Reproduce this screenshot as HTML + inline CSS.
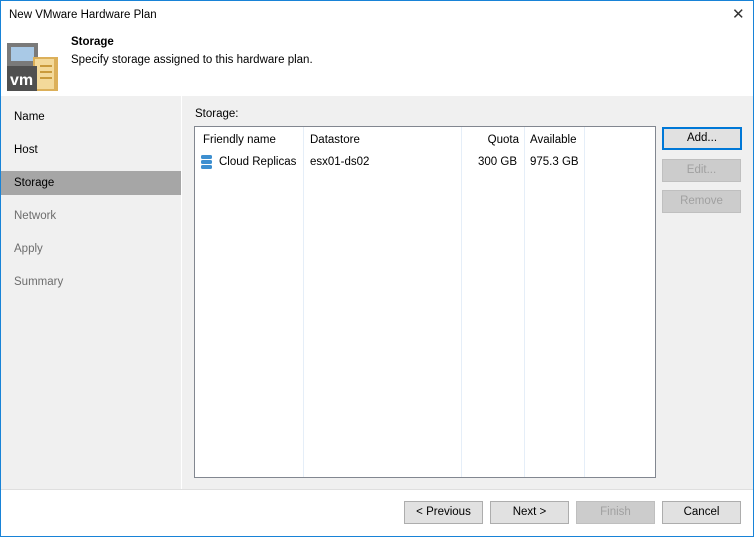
<!DOCTYPE html><html><head><style>
body{margin:0;width:754px;height:537px;overflow:hidden;font-family:"Liberation Sans",sans-serif;font-size:11.5px;color:#000;background:#fff;position:relative}
.a{position:absolute}
.win{position:absolute;left:0;top:0;width:752px;height:535px;border:1px solid #1883d7;background:#fff;overflow:hidden}
.nav div{position:absolute;left:13px}
.btn{position:absolute;height:21px;border:1px solid #adadad;background:#e1e1e1;text-align:center;line-height:21px}
.dis{color:#a0a0a0;border-color:#bfbfbf;background:#ccc}
.col{position:absolute;top:0;bottom:0;width:1px;background:#e5eef8}
</style></head><body><div class="win">
<div class="a" style="left:8px;top:8px">New VMware Hardware Plan</div>
<div class="a" style="left:731px;top:4px;font-size:15px;color:#333">✕</div>
<svg class="a" style="left:6px;top:42px" width="54" height="50">
<rect x="0" y="0" width="31" height="28" fill="#7a7a7a"/><rect x="4" y="4" width="23" height="14" fill="#a9c9e6"/>
<rect x="26" y="14" width="25" height="34" fill="#dcb05a"/><rect x="28" y="16" width="19" height="30" fill="#f3d99a"/>
<rect x="33" y="22" width="12" height="2" fill="#c99a3c"/><rect x="33" y="28" width="12" height="2" fill="#c99a3c"/><rect x="33" y="34" width="12" height="2" fill="#c99a3c"/>
<rect x="0" y="23" width="30" height="25" fill="#505050"/>
<text x="3" y="42" fill="#fff" font-family="Liberation Sans" font-weight="bold" font-size="16">vm</text></svg>
<div class="a" style="left:70px;top:35px;font-weight:bold">Storage</div>
<div class="a" style="left:70px;top:53px">Specify storage assigned to this hardware plan.</div>
<div class="a" style="left:0;top:95px;width:180px;height:393px;background:#f0f0f0"></div>
<div class="a" style="left:181px;top:95px;width:571px;height:393px;background:#f0f0f0"></div>
<div class="a" style="left:0;top:170px;width:180px;height:24px;background:#a6a6a6"></div>
<div class="nav"><div style="top:110px">Name</div><div style="top:143px">Host</div><div style="top:176px">Storage</div>
<div style="top:209px;color:#6d6d6d">Network</div><div style="top:242px;color:#6d6d6d">Apply</div><div style="top:275px;color:#6d6d6d">Summary</div></div>
<div class="a" style="left:194px;top:107px">Storage:</div>
<div class="a" style="left:193px;top:125px;width:460px;height:350px;border:1px solid #828790;background:#fff">
<div class="col" style="left:108px"></div><div class="col" style="left:266px"></div><div class="col" style="left:329px"></div><div class="col" style="left:389px"></div>
<div class="a" style="left:8px;top:7px">Friendly name</div><div class="a" style="left:115px;top:7px">Datastore</div>
<div class="a" style="left:264px;top:7px;width:60px;text-align:right">Quota</div><div class="a" style="left:335px;top:7px">Available</div>
<svg class="a" style="left:6px;top:28px" width="12" height="16"><rect y="0" width="11" height="4" rx="1.5" fill="#3d8fd0"/><rect y="5" width="11" height="4" rx="1.5" fill="#3d8fd0"/><rect y="10" width="11" height="4" rx="1.5" fill="#3d8fd0"/></svg>
<div class="a" style="left:24px;top:29px">Cloud Replicas</div><div class="a" style="left:115px;top:29px">esx01-ds02</div>
<div class="a" style="left:264px;top:29px;width:58px;text-align:right">300 GB</div><div class="a" style="left:335px;top:29px">975.3 GB</div>
</div>
<div class="btn" style="left:661px;top:126px;width:76px;border:2px solid #0078d7;height:19px;line-height:19px">Add...</div>
<div class="btn dis" style="left:661px;top:158px;width:77px">Edit...</div>
<div class="btn dis" style="left:661px;top:189px;width:77px">Remove</div>
<div class="a" style="left:0;top:488px;width:752px;height:1px;background:#dfdfdf"></div>
<div class="btn" style="left:403px;top:500px;width:77px">&lt; Previous</div>
<div class="btn" style="left:489px;top:500px;width:77px">Next &gt;</div>
<div class="btn dis" style="left:575px;top:500px;width:77px">Finish</div>
<div class="btn" style="left:661px;top:500px;width:77px">Cancel</div>
</div></body></html>
